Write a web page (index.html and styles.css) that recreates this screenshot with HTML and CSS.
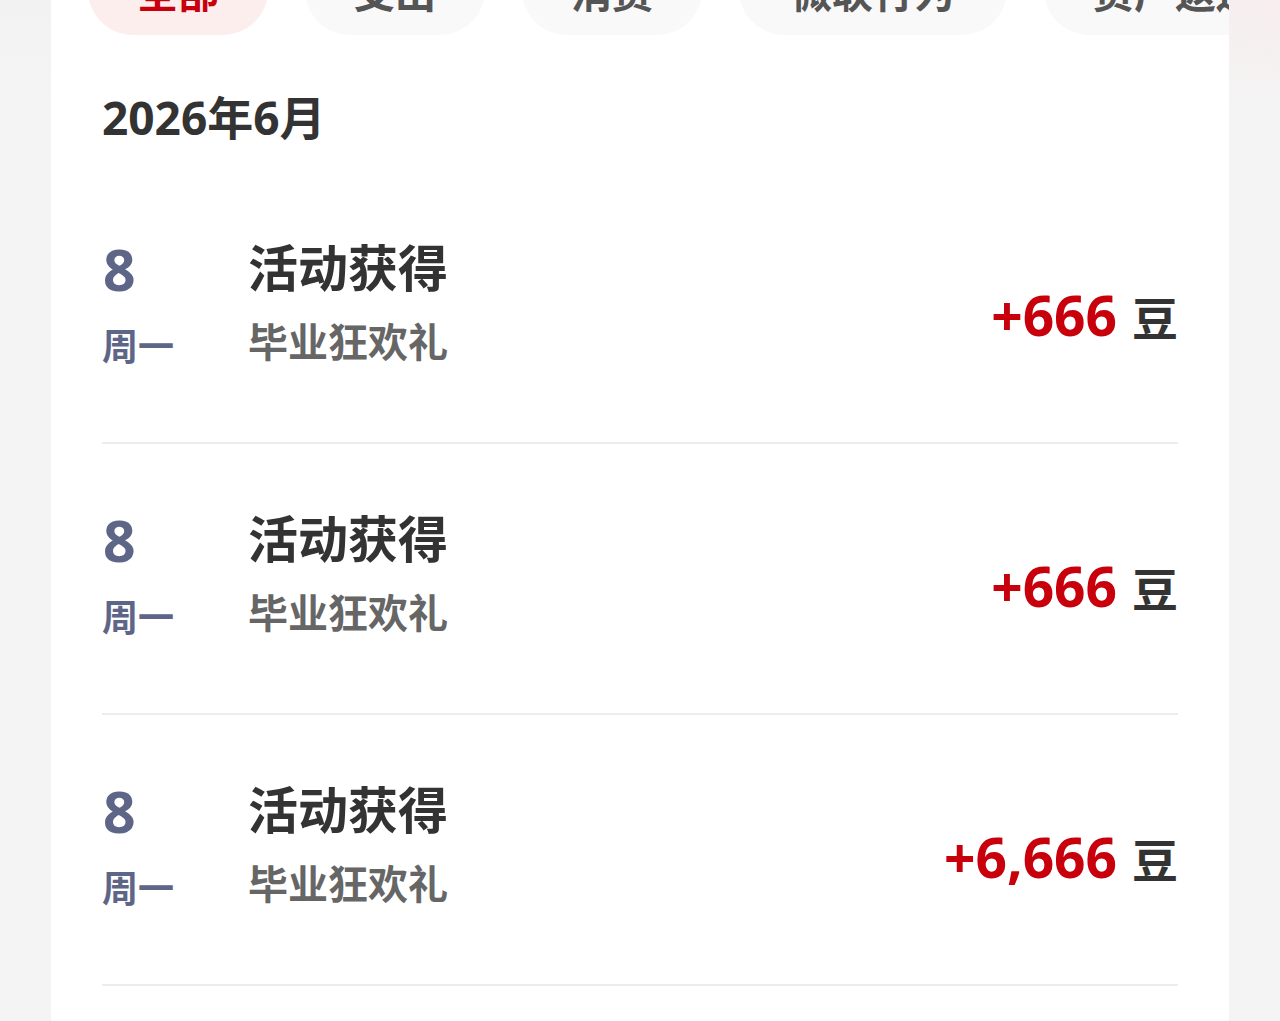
FILE: index.html
```html
<!DOCTYPE html>
<html lang="zh-CN">
<head>
    <meta charset="UTF-8">
    <meta name="viewport" content="width=device-width, initial-scale=1.0">
    <title>豆明细</title>
    <link rel="stylesheet" href="styles.css">
</head>
<body>
    <div class="page">
        <!-- Card with filter tabs and records -->
        <div class="card">
            <div class="tabs">
                <div class="tab active">全部</div>
                <div class="tab">支出</div>
                <div class="tab">消费</div>
                <div class="tab">微联行为</div>
                <div class="tab">资产返还</div>
            </div>

            <h2 class="month">2026年6月</h2>

            <ul class="records">
                <li class="record">
                    <div class="date">
                        <span class="day">8</span>
                        <span class="week">周一</span>
                    </div>
                    <div class="info">
                        <span class="title">活动获得</span>
                        <span class="desc">毕业狂欢礼</span>
                    </div>
                    <div class="amount">
                        <span class="num">+666</span>
                        <span class="unit">豆</span>
                    </div>
                </li>
                <li class="record">
                    <div class="date">
                        <span class="day">8</span>
                        <span class="week">周一</span>
                    </div>
                    <div class="info">
                        <span class="title">活动获得</span>
                        <span class="desc">毕业狂欢礼</span>
                    </div>
                    <div class="amount">
                        <span class="num">+666</span>
                        <span class="unit">豆</span>
                    </div>
                </li>
                <li class="record">
                    <div class="date">
                        <span class="day">8</span>
                        <span class="week">周一</span>
                    </div>
                    <div class="info">
                        <span class="title">活动获得</span>
                        <span class="desc">毕业狂欢礼</span>
                    </div>
                    <div class="amount">
                        <span class="num">+6,666</span>
                        <span class="unit">豆</span>
                    </div>
                </li>
                <li class="record">
                    <div class="date">
                        <span class="day">8</span>
                        <span class="week">周一</span>
                    </div>
                    <div class="info">
                        <span class="title">活动获得</span>
                        <span class="desc">毕业狂欢礼</span>
                    </div>
                    <div class="amount">
                        <span class="num">+666</span>
                        <span class="unit">豆</span>
                    </div>
                </li>
            </ul>
        </div>
    </div>
</body>
</html>
```

FILE: styles.css
```css
html, body {
    margin: 0;
    padding: 0;
    height: 100%;
    overflow: hidden;
}

body {
    font-family: "Noto Sans CJK SC", "Noto Sans", sans-serif;
    background:
        linear-gradient(to bottom, rgba(244, 244, 244, 0) 0, #f4f4f4 110px),
        linear-gradient(to right, #f2f2f2 0, #f3f2f2 80%, #f7eded 100%);
    background-color: #f4f4f4;
}

.page {
    padding: 0 51px;
}

.card {
    background-color: #fff;
    padding: 0 51px;
    min-height: 1100px;
    overflow: hidden;
}

/* Filter tabs (scrolled partly out of view) */
.tabs {
    display: flex;
    gap: 37px;
    margin: -55px 0 0 -14px;
    white-space: nowrap;
}

.tab {
    flex: none;
    height: 90px;
    line-height: 90px;
    padding: 0 49px;
    border-radius: 45px;
    background-color: #f9f9f9;
    color: #555;
    font-size: 41px;
    font-weight: bold;
}

.tab:nth-child(4) {
    padding: 0 52px;
}

.tab.active {
    background-color: #fdeeee;
    color: #c8000b;
}

.month {
    margin: 51px 0 0;
    font-family: "Open Sans", "Noto Sans CJK SC", sans-serif;
    font-size: 46px;
    line-height: 62px;
    font-weight: bold;
    color: #333;
}

/* Records */
.records {
    list-style: none;
    margin: 25px 0 0;
    padding: 0;
}

.record {
    display: flex;
    align-items: center;
    height: 271px;
    padding-bottom: 12px;
    box-sizing: border-box;
    border-bottom: 2px solid #ececec;
}

.date {
    width: 146px;
    display: flex;
    flex-direction: column;
    color: #5e6687;
    font-weight: bold;
}

.day {
    font-family: "Open Sans", "Noto Sans CJK SC", sans-serif;
    font-size: 57px;
    line-height: 62px;
    padding-left: 1px;
}

.week {
    font-size: 36px;
    line-height: 44px;
    margin-top: 22px;
}

.info {
    flex: 1;
    display: flex;
    flex-direction: column;
    margin-bottom: 4px;
    font-weight: bold;
}

.title {
    font-size: 50px;
    line-height: 60px;
    color: #333;
}

.desc {
    font-size: 40px;
    line-height: 48px;
    margin-top: 21px;
    color: #666;
}

.amount {
    display: flex;
    align-items: baseline;
    font-weight: bold;
    margin-top: 25px;
}

.num {
    font-family: "Open Sans", "Noto Sans CJK SC", sans-serif;
    font-size: 55px;
    color: #c8000b;
}

.unit {
    font-size: 46px;
    color: #333;
    margin-left: 15px;
}
```
